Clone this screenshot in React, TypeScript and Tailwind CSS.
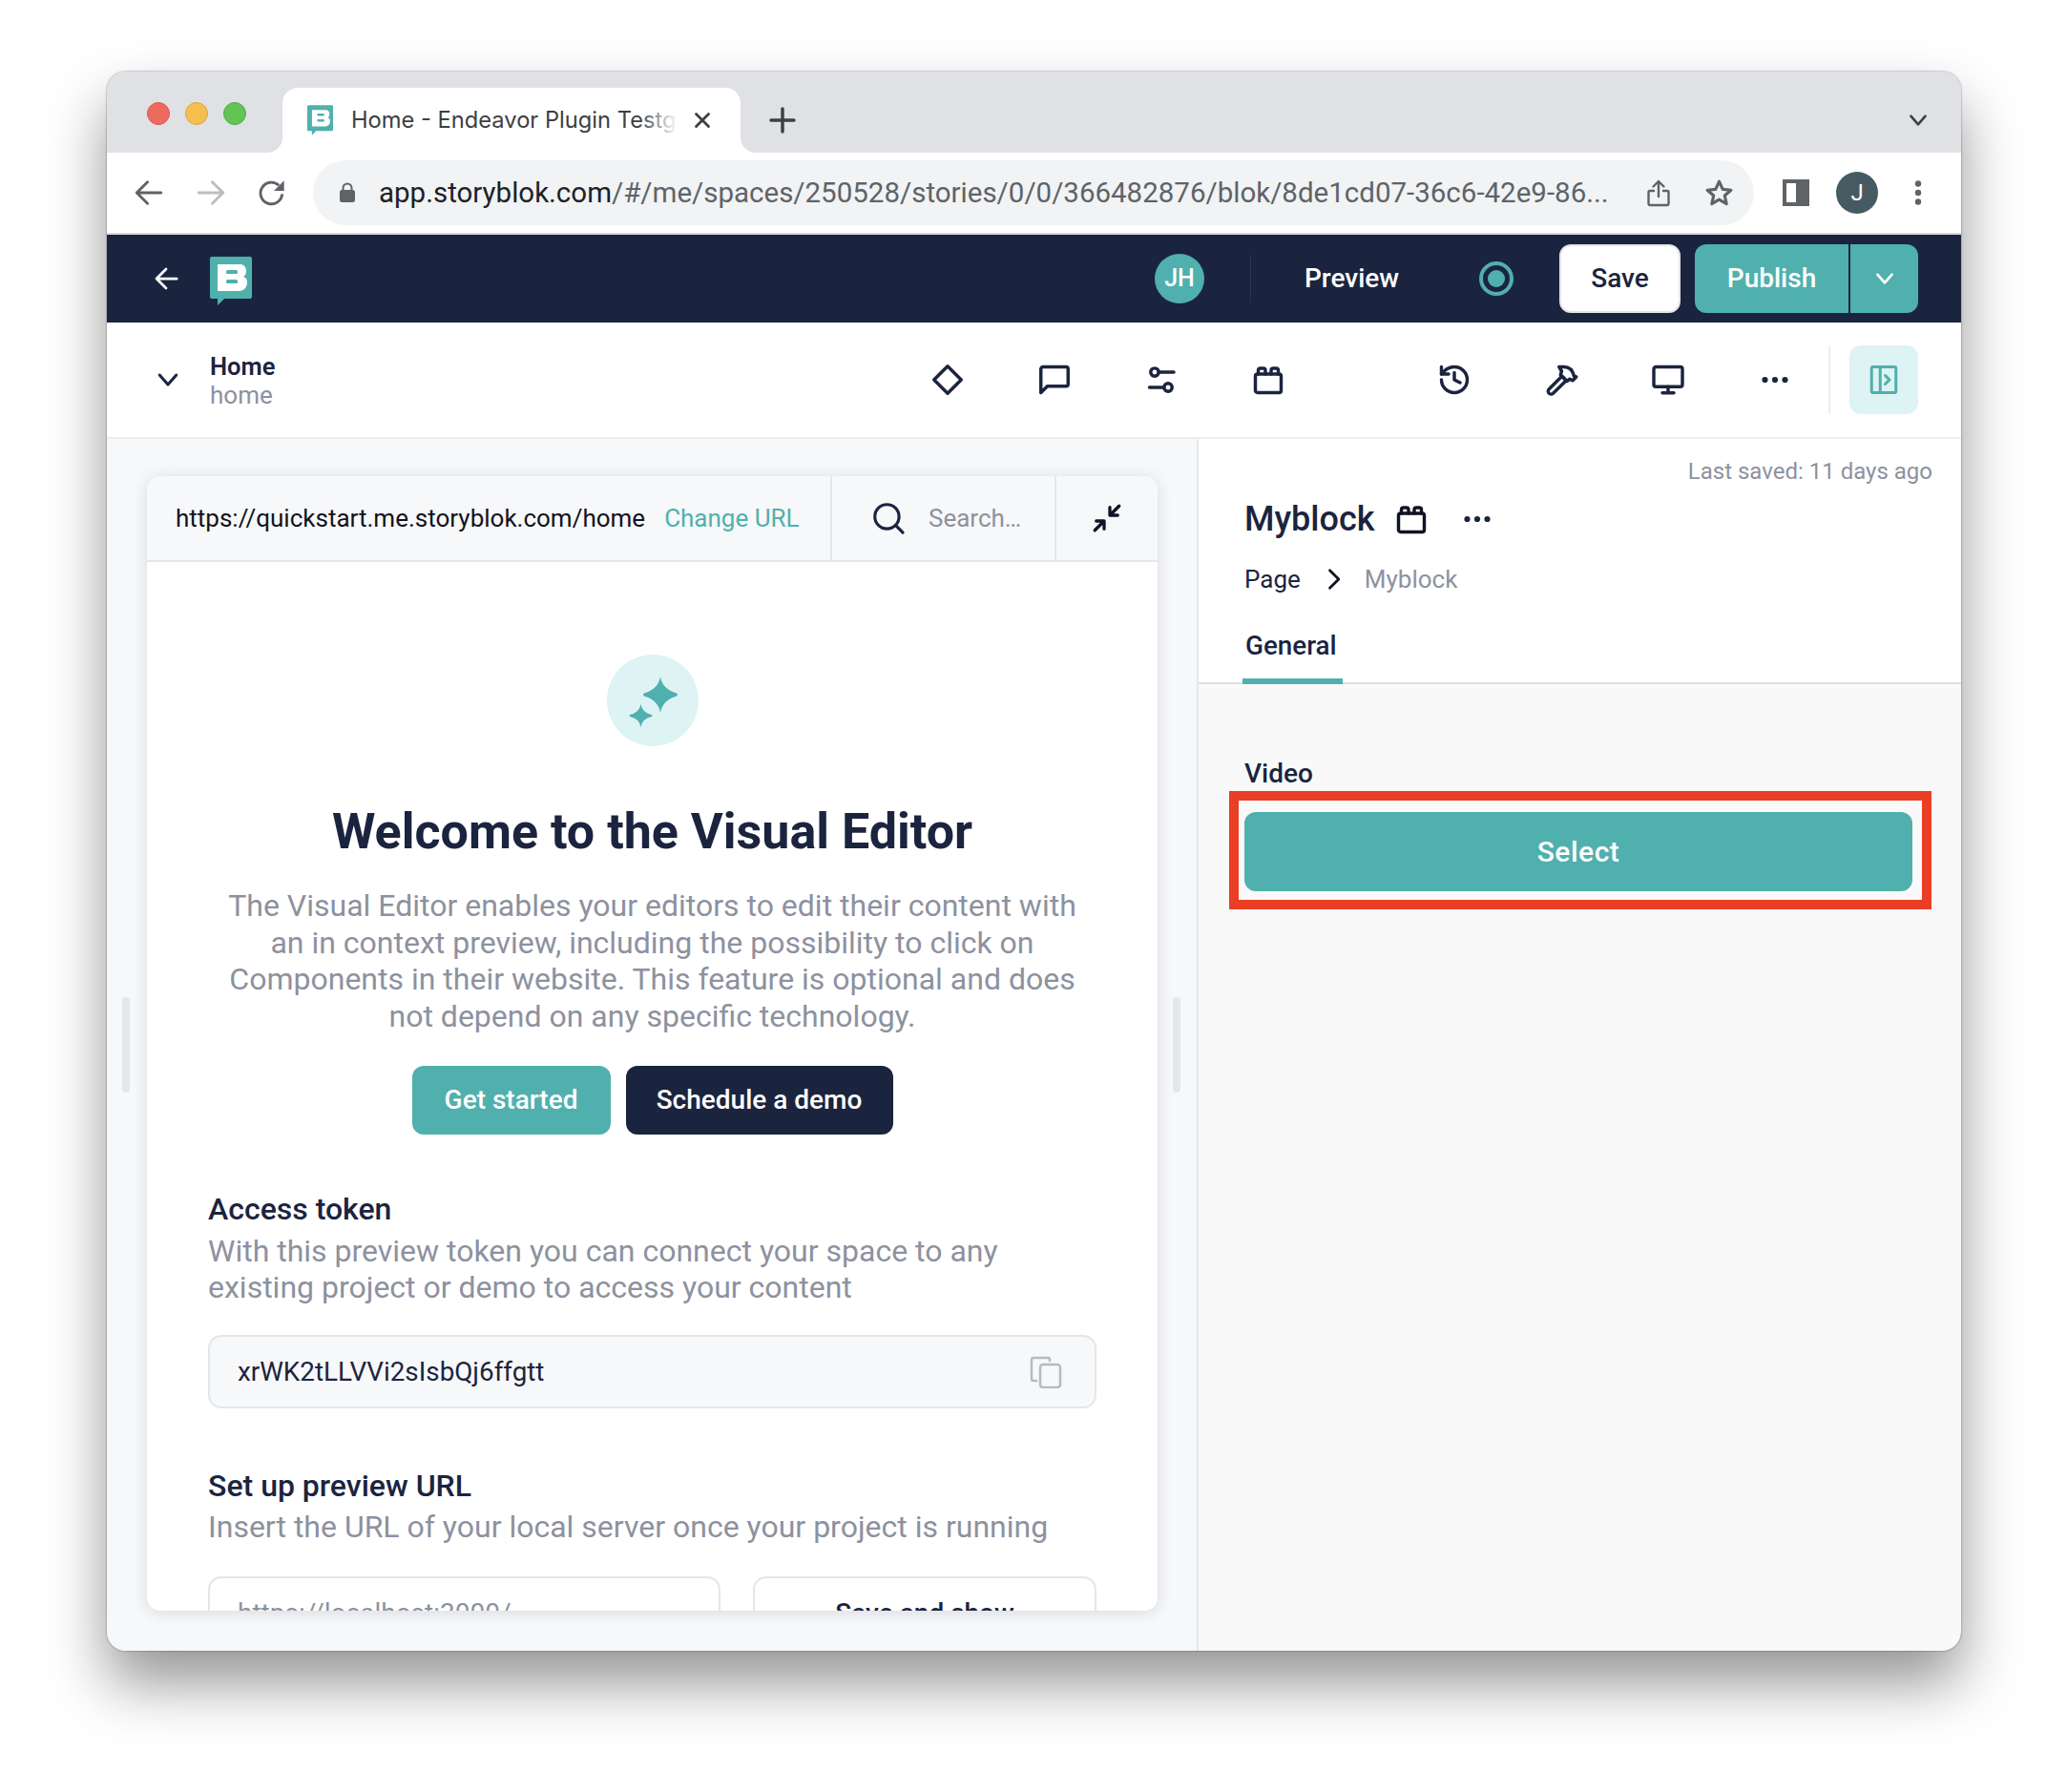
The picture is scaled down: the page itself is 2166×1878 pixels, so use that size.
import React from "react";

const Stroke = ({ s = 36, w = 2.3, c = "#1b243f", vb = 24, children, className = "" }: any) => (
  <svg width={s} height={s} viewBox={`0 0 ${vb} ${vb}`} fill="none" stroke={c} strokeWidth={w} strokeLinecap="round" strokeLinejoin="round" className={className}>
    {children}
  </svg>
);

const Logo = ({ w, h, c = "#50b0ae", inner = "white" }: any) => (
  <svg width={w} height={h} viewBox="0 0 44 51">
    <path d="M2 0h40a2 2 0 0 1 2 2v40a2 2 0 0 1-2 2H15l-7 7v-7H2a2 2 0 0 1-2-2V2a2 2 0 0 1 2-2z" fill={c} />
    <path d="M8 8h23c5 0 7 3 7 7 0 3-1 5-3 6 3 1 4 3 4 6 0 5-3 9-9 9H8z" fill={inner} />
    <rect x="17" y="14" width="12" height="4" rx="1.5" fill={c} />
    <rect x="17" y="24" width="12" height="4" rx="1.5" fill={c} />
  </svg>
);

const Brick = ({ s = 36, c = "#1b243f" }: { s?: number; c?: string }) => (
  <Stroke s={s} w={2.3} c={c}>
    <rect x="3" y="8" width="18" height="13" rx="1.5" />
    <path d="M5 8V5.500A1.500 1.500 0 0 1 6.500 4h2A1.500 1.500 0 0 1 10 5.500V8M14 8V5.500A1.500 1.500 0 0 1 15.500 4h2A1.500 1.500 0 0 1 19 5.500V8" />
  </Stroke>
);

const Dots = () => (
  <svg width="28" height="8" viewBox="0 0 28 8" fill="#1b243f">
    <circle cx="3.500" cy="4" r="3.100" /><circle cx="14" cy="4" r="3.100" /><circle cx="24.500" cy="4" r="3.100" />
  </svg>
);

const ToolIcon = ({ children, className = "" }: any) => (
  <div className={`w-[112px] flex items-center justify-center ${className}`}>{children}</div>
);

export default function App() {
  return (
    <div className="w-[2166px] h-[1878px] bg-white pt-[75px] pl-[112px] font-['Roboto',sans-serif] text-[#1b243f]">
      <div className="w-[1943px] h-[1655px] rounded-[20px] overflow-hidden flex flex-col shadow-[0_0_2px_rgba(0,0,0,0.55),0_34px_62px_rgba(0,0,0,0.42)] bg-[#f9f9f9]">
        {/* Tab strip */}
        <div className="h-[85px] shrink-0 bg-[#dfe1e5] flex items-end">
          <div className="w-[184px] h-[68px] flex gap-4 pl-[42px] pt-[15px] shrink-0">
            <span className="w-6 h-6 rounded-full bg-[#ee6a5f] border border-[#d85a50]" />
            <span className="w-6 h-6 rounded-full bg-[#f5bf4f] border border-[#d9a53f]" />
            <span className="w-6 h-6 rounded-full bg-[#61c454] border border-[#52a947]" />
          </div>
          <div className="relative w-[480px] h-[68px] bg-white rounded-t-[16px] flex items-center pl-[26px] shrink-0">
            <span className="absolute -left-4 bottom-0 w-4 h-4 bg-white"><span className="block w-4 h-4 bg-[#dfe1e5] rounded-br-[16px]" /></span>
            <span className="absolute -right-4 bottom-0 w-4 h-4 bg-white"><span className="block w-4 h-4 bg-[#dfe1e5] rounded-bl-[16px]" /></span>
            <Logo w={27} h={32} />
            <div className="relative ml-[19px] w-[342px] overflow-hidden whitespace-nowrap text-[23.700px] text-[#3c4043] font-['Inter',sans-serif]">
              Home - Endeavor Plugin Testg
              <span className="absolute right-0 top-0 bottom-0 w-[40px] bg-linear-to-r from-white/0 to-white" />
            </div>
            <Stroke s={26} w={2.6} c="#3c4043" className="ml-[13px]"><path d="M6 6l12 12M18 6L6 18" /></Stroke>
          </div>
          <div className="h-[68px] flex items-center ml-[28px]">
            <Stroke s={32} w={2.6} c="#3c4043"><path d="M12 3v18M3 12h18" /></Stroke>
          </div>
          <div className="flex-1" />
          <div className="h-[68px] flex items-center pr-[32px]">
            <Stroke s={26} w={2.4} c="#3c4043"><path d="M5 8l7 8 7-8" /></Stroke>
          </div>
        </div>

        {/* Browser toolbar */}
        <div className="h-[84px] shrink-0 bg-white flex items-center border-b-0">
          <div className="w-[216px] pl-[27px] flex items-center gap-[31px] shrink-0">
            <Stroke s={34} w={2} c="#5f6368"><path d="M21 12H3M11 4l-8 8 8 8" /></Stroke>
            <Stroke s={34} w={2} c="#bdbdbd"><path d="M3 12h18M13 4l8 8-8 8" /></Stroke>
            <svg width="32" height="32" viewBox="0 0 24 24" fill="none"><path d="M20 13a8.500 8.500 0 1 1-2.600-6.800" stroke="#5f6368" strokeWidth="2.200" /><path d="M21.500 2.500v8h-8z" fill="#5f6368" /></svg>
          </div>
          <div className="w-[1510px] h-[68px] rounded-full bg-[#f1f3f4] flex items-center pl-[27px] shrink-0">
            <svg width="18" height="22" viewBox="0 0 18 22" className="shrink-0"><rect x="1" y="8" width="16" height="13" rx="2.500" fill="#5f6368" /><path d="M4.500 9V6a4.500 4.500 0 0 1 9 0v3" fill="none" stroke="#5f6368" strokeWidth="2" /></svg>
            <div className="ml-[24px] w-[1290px] shrink-0 text-[29.500px] whitespace-nowrap text-[#5f6368]">
              <span className="text-[#202124]">app.storyblok.com</span>/#/me/spaces/250528/stories/0/0/366482876/blok/8de1cd07-36c6-42e9-86...
            </div>
            <svg width="24" height="30" viewBox="0 0 24 30" fill="none" stroke="#5f6368" strokeWidth="2.400" strokeLinecap="round" strokeLinejoin="round" className="ml-[39px] shrink-0"><path d="M12 19V3M6.500 8.500L12 3l5.500 5.500M7 13H3a1.500 1.500 0 0 0-1.500 1.500v12A1.500 1.500 0 0 0 3 28h18a1.500 1.500 0 0 0 1.500-1.500v-12A1.500 1.500 0 0 0 21 13h-4" /></svg>
            <Stroke s={33} w={2.300} c="#5f6368" className="ml-[35px]"><path d="M12 3l2.700 6 6.300.6-4.800 4.200 1.400 6.300L12 16.800 6.400 20.100l1.400-6.300L3 9.600 9.300 9z" /></Stroke>
          </div>
          <div className="flex-1 flex items-center pl-[30px]">
            <span className="w-[28px] h-[28px] border-[4px] border-[#5f6368] border-r-[14px] box-border" />
            <span className="ml-[28px] w-[44px] h-[44px] rounded-full bg-[#465a64] text-white text-[24px] flex items-center justify-center">J</span>
            <svg width="8" height="26" viewBox="0 0 8 26" fill="#5f6368" className="ml-[38px]"><circle cx="4" cy="3.500" r="3.200" /><circle cx="4" cy="13" r="3.200" /><circle cx="4" cy="22.500" r="3.200" /></svg>
          </div>
        </div>
        <div className="h-[2px] shrink-0 bg-[#d9dadc]" />

        {/* Storyblok dark bar */}
        <div className="h-[92px] shrink-0 bg-[#1b243f] flex items-center text-white">
          <div className="pl-[47px] w-[108px]">
            <Stroke s={30} w={2.200} c="white"><path d="M21 12H4M12 4l-8 8 8 8" /></Stroke>
          </div>
          <div className="pt-[5px]"><Logo w={44} h={51} /></div>
          <div className="flex-1" />
          <div className="w-[52px] h-[52px] rounded-full bg-[#50b0ae] flex items-center justify-center text-[25px] font-medium">JH</div>
          <div className="w-px h-[50px] bg-[#2b3450] ml-[48px]" />
          <div className="ml-[56px] text-[28px] font-medium w-[101px] whitespace-nowrap">Preview</div>
          <div className="ml-[82px] w-[36px] h-[36px] rounded-full border-[4px] border-[#50b0ae] flex items-center justify-center"><span className="w-[18px] h-[18px] rounded-full bg-[#50b0ae]" /></div>
          <div className="ml-[48px] w-[127px] h-[72px] rounded-[12px] bg-white border-2 border-[#e4e6eb] text-[#1b243f] text-[28px] font-medium flex items-center justify-center">Save</div>
          <div className="ml-[15px] w-[234px] h-[72px] rounded-[12px] bg-[#50b0ae] flex overflow-hidden">
            <div className="w-[163px] flex items-center justify-center text-[28px] font-medium border-r-2 border-[#1b243f]">Publish</div>
            <div className="flex-1 flex items-center justify-center"><Stroke s={26} w={2.500} c="white"><path d="M5 8l7 8 7-8" /></Stroke></div>
          </div>
          <div className="w-[45px] shrink-0" />
        </div>

        {/* Story bar */}
        <div className="h-[122px] shrink-0 bg-white flex items-center border-b-2 border-[#eceef1]">
          <div className="pl-[49px] w-[108px]"><Stroke s={30} w={2.400}><path d="M5 8l7 8 7-8" /></Stroke></div>
          <div className="flex flex-col leading-[30px] pt-[1px]">
            <span className="text-[25.500px] font-semibold">Home</span>
            <span className="text-[26px] text-[#8d919f]">home</span>
          </div>
          <div className="flex-1" />
          <div className="flex items-center">
            <ToolIcon>
              <Stroke s={36}><path d="M12 2.500l9.500 9.500-9.500 9.500L2.500 12z" /></Stroke>
            </ToolIcon>
            <ToolIcon><Stroke s={36}><path d="M2.500 21V4.500A1.500 1.500 0 0 1 4 3h16a1.500 1.500 0 0 1 1.500 1.500V15a1.500 1.500 0 0 1-1.500 1.500H7z" /></Stroke></ToolIcon>
            <ToolIcon>
              <Stroke s={36}><circle cx="7.300" cy="6.700" r="2.800" /><path d="M10.300 6.700h10.400M3.700 17.300h10" /><circle cx="16.700" cy="17.300" r="2.800" /></Stroke>
            </ToolIcon>
            <ToolIcon className="mr-[83px]"><Brick /></ToolIcon>
            <ToolIcon>
              <Stroke s={36}><path d="M3 12a9 9 0 1 0 9-9 9.750 9.750 0 0 0-6.740 2.740L3 8" /><path d="M3 3v5h5" /><path d="M12 7v5l4 2" /></Stroke>
            </ToolIcon>
            <ToolIcon>
              <Stroke s={36}><path d="M3.500 18.500L12.500 9.500 15.500 12.500 6.300 21.500a1.900 1.900 0 0 1-2.800-3z" /><path d="M10.500 3h3.500c3.500 0 6 2.500 7 6.500l1.500.5-2.500 2.500-2-1-2 1.500-4.500-4.500.8-2.500z" /></Stroke>
            </ToolIcon>
            <ToolIcon>
              <Stroke s={36}><rect x="2" y="3" width="20" height="13.800" rx="1.500" /><path d="M12 16.800V21M8 21.200h8" /></Stroke>
            </ToolIcon>
            <ToolIcon><Dots /></ToolIcon>
          </div>
          <div className="w-[2px] h-[72px] bg-[#eceef1]" />
          <div className="w-[72px] h-[72px] rounded-[12px] bg-[#def3f3] ml-[20px] flex items-center justify-center">
            <Stroke s={36} w={2} c="#50b0ae"><rect x="3.500" y="3" width="17" height="18" rx="1" /><path d="M9.500 3v18M13 9l3 3-3 3" /></Stroke>
          </div>
          <div className="w-[45px] shrink-0" />
        </div>

        {/* Body */}
        <div className="flex-1 min-h-0 flex">
          <div className="w-[1142px] shrink-0 bg-[#f7f8f9] flex items-stretch relative">
            <span className="absolute left-[16px] top-[585px] w-2 h-[100px] rounded-full bg-[#e4e6e9]" />
            <span className="absolute left-[1117px] top-[585px] w-2 h-[100px] rounded-full bg-[#e4e6e9]" />
            <div className="ml-[42px] mr-[41px] mt-[39px] mb-[42px] w-[1059px] rounded-[14px] bg-white overflow-hidden flex flex-col shadow-[0_2px_16px_rgba(27,36,63,0.14)]">
              {/* URL bar */}
              <div className="h-[90px] shrink-0 bg-[#f7f8f9] border-b-2 border-[#e4e6eb] flex items-center">
                <div className="w-[716px] shrink-0 pl-[30px] flex items-center whitespace-nowrap text-[26px]">
                  <span className="text-[#101322]">https://quickstart.me.storyblok.com/home</span>
                  <span className="ml-[20px] text-[#50b0ae]">Change URL</span>
                </div>
                <div className="w-[235px] h-full shrink-0 border-l-2 border-[#e4e6eb] flex items-center pl-[40px]">
                  <Stroke s={38} w={2}><circle cx="11" cy="11" r="8" /><path d="M17 17l4.500 4.500" /></Stroke>
                  <span className="ml-[23px] text-[26px] text-[#8d919f]">Search…</span>
                </div>
                <div className="flex-1 h-full border-l-2 border-[#e4e6eb] flex items-center justify-center">
                  <Stroke s={36} w={2.200} c="#101322"><path d="M20.500 3.500L14 10M14 4.500V10h5.500M3.500 20.500L10 14M10 19.500V14H4.500" /></Stroke>
                </div>
              </div>
              {/* Welcome */}
              <div className="flex-1 min-h-0 overflow-hidden px-[64px] flex flex-col">
                <div className="mt-[97px] w-[96px] h-[96px] shrink-0 rounded-full bg-[#def3f3] self-center">
                  <svg width="96" height="96" viewBox="0 0 96 96" fill="#50b0ae">
                    <path d="M56 23Q58 36 73 40.500Q75 42 73 43.500Q58 48 56 61Q54 48 39 43.500Q37 42 39 40.500Q54 36 56 23z" />
                    <path d="M35.500 52Q37 61 47 63Q48 64 47 65Q37 67 35.500 76Q34 67 24 65Q23 64 24 63Q34 61 35.500 52z" />
                  </svg>
                </div>
                <h1 className="mt-[60px] text-center text-[52px] leading-[60px] font-bold">Welcome to the Visual Editor</h1>
                <p className="mt-[28px] text-center text-[32px] leading-[38.500px] text-[#8d919f] whitespace-nowrap">
                  The Visual Editor enables your editors to edit their content with<br />an in context preview, including the possibility to click on<br />Components in their website. This feature is optional and does<br />not depend on any specific technology.
                </p>
                <div className="mt-[33px] flex justify-center gap-[16px]">
                  <div className="w-[208px] h-[72px] rounded-[12px] bg-[#50b0ae] text-white text-[28px] font-medium flex items-center justify-center">Get started</div>
                  <div className="w-[280px] h-[72px] rounded-[12px] bg-[#1b243f] text-white text-[28px] font-medium flex items-center justify-center">Schedule a demo</div>
                </div>
                <h2 className="mt-[60px] text-[32px] leading-[36px] font-medium">Access token</h2>
                <p className="mt-[7px] text-[32px] leading-[38px] text-[#8d919f]">With this preview token you can connect your space to any<br />existing project or demo to access your content</p>
                <div className="mt-[31px] h-[77px] shrink-0 rounded-[14px] border-2 border-[#e4e6eb] bg-[#f7f8f9] flex items-center justify-between pl-[29px] pr-[34px]">
                  <span className="text-[27.800px] pt-[1px]">xrWK2tLLVVi2sIsbQj6ffgtt</span>
                  <svg width="34" height="34" viewBox="0 0 34 34" fill="none" stroke="#b6bac4" strokeWidth="2.500" strokeLinejoin="round" strokeLinecap="round"><rect x="11" y="9" width="21" height="24" rx="3" /><path d="M7 26H4a2 2 0 0 1-2-2V4a2 2 0 0 1 2-2h15a2 2 0 0 1 2 2v1" /></svg>
                </div>
                <h2 className="mt-[63px] text-[32px] leading-[36px] font-medium">Set up preview URL</h2>
                <p className="mt-[6px] text-[32px] leading-[38px] text-[#8d919f]">Insert the URL of your local server once your project is running</p>
                <div className="mt-[33px] flex gap-[34px]">
                  <div className="w-[537px] h-[77px] shrink-0 rounded-[14px] border-2 border-[#e4e6eb] flex items-center pl-[29px] text-[28px] text-[#8d919f]">https://localhost:3000/</div>
                  <div className="flex-1 h-[77px] rounded-[14px] border-2 border-[#e4e6eb] flex items-center justify-center text-[28px] font-medium">Save and show</div>
                </div>
              </div>
            </div>
          </div>

          {/* Right panel */}
          <div className="flex-1 flex flex-col border-l-2 border-[#e6e7ea]">
            <div className="h-[257px] shrink-0 bg-white border-b-2 border-[#dedfe1] relative pl-[48px]">
              <div className="pt-[19px] pr-[30px] text-right text-[24px] leading-[30px] text-[#8d919f]">Last saved: 11 days ago</div>
              <div className="mt-[11px] flex items-center">
                <span className="text-[36px] leading-[48px] font-medium">Myblock</span>
                <span className="ml-[20px]"><Brick s={36} c="#101322" /></span>
                <span className="ml-[37px]"><Dots /></span>
              </div>
              <div className="mt-[21px] flex items-center text-[26px] leading-[36px]">
                <span>Page</span>
                <Stroke s={28} w={2.400} c="#101322" className="ml-[20px]"><path d="M9 4l8 8-8 8" /></Stroke>
                <span className="ml-[19px] text-[#8d919f]">Myblock</span>
              </div>
              <div className="absolute left-[46px] bottom-[-2px] w-[105px] h-[58px] border-b-[6px] border-[#50b0ae] text-[27.800px] leading-[36px] font-medium pl-[3px] whitespace-nowrap">General</div>
            </div>
            <div className="flex-1 pl-[48px] pr-[31px] pt-[76px] relative">
              <div className="text-[28px] leading-[36px] font-medium">Video</div>
              <div className="-ml-[16px] h-[124px] border-[10px] border-[#ea3e25] pl-[6px] pt-[12px] pr-[10px]">
                <div className="h-[83px] rounded-[12px] bg-[#50b0ae] text-white text-[30px] tracking-[0.5px] font-medium flex items-center justify-center">Select</div>
              </div>
            </div>
          </div>
        </div>
      </div>
    </div>
  );
}
